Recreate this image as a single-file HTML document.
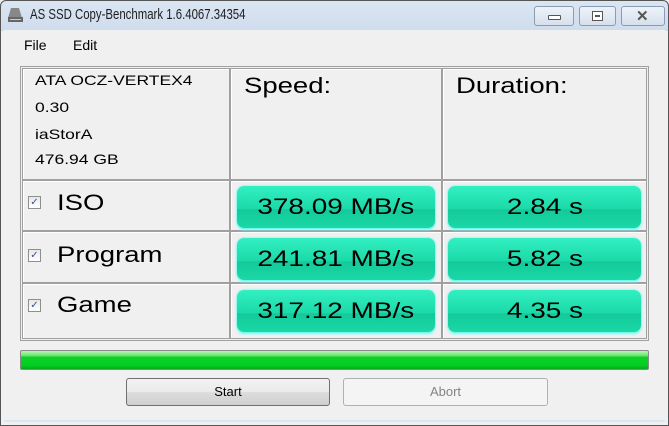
<!DOCTYPE html>
<html><head><style>
*{margin:0;padding:0;box-sizing:border-box}
body{width:669px;height:426px;overflow:hidden;background:#f0f0f0;font-family:"Liberation Sans",sans-serif;position:relative}
.a{position:absolute}
.s{display:inline-block;transform:scaleX(1.25);transform-origin:left center;white-space:nowrap}
.sc{display:inline-block;transform:scaleX(1.27);transform-origin:center;white-space:nowrap}
#frame{left:0;top:0;width:669px;height:426px;border:1px solid #555;border-radius:6px 6px 0 0;background:linear-gradient(#dbe6f3,#cfdcec 30px,#f0f0f0 30px)}
#client{left:4px;top:30px;width:661px;height:392px;background:#f0f0f0;border-bottom:2px solid #dbe6f3}
.title{left:30px;top:6px;font-size:15px;color:#1e1e1e;transform:scaleX(0.76);transform-origin:left;white-space:nowrap}
.wb{top:6px;height:20px;border:1px solid #8a9bb5;border-radius:3px;background:linear-gradient(#eef3f9,#d6e0ec)}
.menu{top:37px;font-size:14px;color:#000}
.cell{border:1px solid #a0a0a0;box-shadow:inset 1px 1px 0 #fff}
.info{font-size:14px;color:#000;left:35px}
.hd{font-size:22px;color:#000;top:73px}
.lbl{font-size:22px;color:#000;left:57px}
.cb{left:28px;width:13px;height:13px;border:1px solid #8e8f8f;background:linear-gradient(#e8e8e8,#fff);font-size:10px;color:#3f4f8f;text-align:center;line-height:11px}
.bar{border-radius:7px;background:linear-gradient(#33f0c2,#1cd9a9 55%,#14c99a 56%,#1ad8a6);box-shadow:0 0 2px #5ef,0 2px 2px #7fe;font-size:22px;text-align:center;line-height:42px;color:#000}
.btn{top:378px;height:28px;border-radius:3px;font-size:13px;text-align:center;line-height:26px}
</style></head><body>
<div class="a" id="frame"></div>
<div class="a" id="client"></div>
<svg class="a" style="left:7px;top:6px" width="18" height="18"><path d="M4 2h8l3 10H1z" fill="#888"/><rect x="1" y="11" width="15" height="5" fill="#666"/><rect x="3" y="13" width="11" height="1" fill="#ccc"/></svg>
<div class="a title">AS SSD Copy-Benchmark 1.6.4067.34354</div>
<div class="a wb" style="left:534px;width:40px"><div class="a" style="left:13px;top:8px;width:13px;height:5px;border:1px solid #555;border-radius:1px;background:#fff"></div></div>
<div class="a wb" style="left:579px;width:37px"><div class="a" style="left:12px;top:4px;width:11px;height:10px;border:1px solid #555;background:#fff"><div class="a" style="left:2px;top:3px;width:5px;height:2px;background:#555"></div></div></div>
<div class="a wb" style="left:621px;width:44px"><div class="a" style="left:14px;top:0px;font-size:15px;font-weight:bold;color:#555">✕</div></div>
<div class="a menu" style="left:24px">File</div>
<div class="a menu" style="left:73px">Edit</div>

<div class="a" style="left:20px;top:66px;width:629px;height:275px;border:1px solid #a0a0a0"></div>
<div class="a cell" style="left:22px;top:68px;width:208px;height:112px"></div>
<div class="a cell" style="left:230px;top:68px;width:212px;height:112px"></div>
<div class="a cell" style="left:442px;top:68px;width:205px;height:112px"></div>
<div class="a cell" style="left:22px;top:180px;width:208px;height:51px"></div>
<div class="a cell" style="left:230px;top:180px;width:212px;height:51px"></div>
<div class="a cell" style="left:442px;top:180px;width:205px;height:51px"></div>
<div class="a cell" style="left:22px;top:231px;width:208px;height:52px"></div>
<div class="a cell" style="left:230px;top:231px;width:212px;height:52px"></div>
<div class="a cell" style="left:442px;top:231px;width:205px;height:52px"></div>
<div class="a cell" style="left:22px;top:283px;width:208px;height:56px"></div>
<div class="a cell" style="left:230px;top:283px;width:212px;height:56px"></div>
<div class="a cell" style="left:442px;top:283px;width:205px;height:56px"></div>

<div class="a info" style="top:72px"><span class="s">ATA OCZ-VERTEX4</span></div>
<div class="a info" style="top:99px"><span class="s">0.30</span></div>
<div class="a info" style="top:126px"><span class="s">iaStorA</span></div>
<div class="a info" style="top:151px"><span class="s">476.94 GB</span></div>
<div class="a hd" style="left:244px"><span class="s">Speed:</span></div>
<div class="a hd" style="left:456px"><span class="s">Duration:</span></div>

<div class="a cb" style="top:196px">✓</div><div class="a lbl" style="top:190px"><span class="s">ISO</span></div>
<div class="a cb" style="top:249px">✓</div><div class="a lbl" style="top:242px"><span class="s">Program</span></div>
<div class="a cb" style="top:299px">✓</div><div class="a lbl" style="top:292px"><span class="s">Game</span></div>

<div class="a bar" style="left:237px;top:186px;width:198px;height:42px"><span class="sc">378.09 MB/s</span></div>
<div class="a bar" style="left:448px;top:186px;width:193px;height:42px"><span class="sc">2.84 s</span></div>
<div class="a bar" style="left:237px;top:238px;width:198px;height:42px"><span class="sc">241.81 MB/s</span></div>
<div class="a bar" style="left:448px;top:238px;width:193px;height:42px"><span class="sc">5.82 s</span></div>
<div class="a bar" style="left:237px;top:290px;width:198px;height:42px"><span class="sc">317.12 MB/s</span></div>
<div class="a bar" style="left:448px;top:290px;width:193px;height:42px"><span class="sc">4.35 s</span></div>

<div class="a" style="left:20px;top:350px;width:629px;height:20px;border:1px solid #8a8a8a;border-radius:2px;background:linear-gradient(#b6f5b6,#6ee86e 25%,#0fcf2a 35%,#00d020 80%,#0aa81f)"></div>

<div class="a btn" style="left:126px;width:204px;border:1px solid #707070;background:linear-gradient(#f2f2f2,#ebebeb 50%,#dddddd 51%,#cfcfcf);color:#000">Start</div>
<div class="a btn" style="left:343px;width:205px;border:1px solid #adb2b5;background:#f4f4f4;color:#838383">Abort</div>
</body></html>
